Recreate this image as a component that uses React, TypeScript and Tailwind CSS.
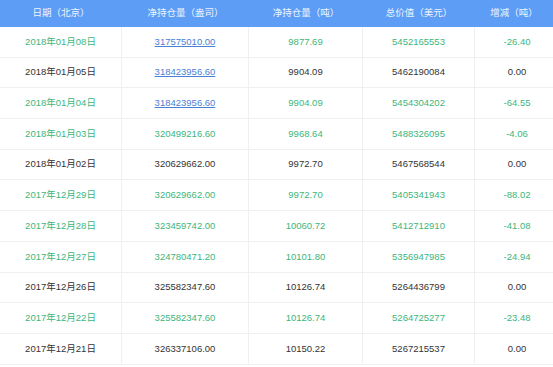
import React from 'react';

type Row = {
  date: string;
  oz: string;
  ton: string;
  value: string;
  change: string;
  link?: boolean;
};

const rows: Row[] = [
  { date: '2018年01月08日', oz: '317575010.00', ton: '9877.69', value: '5452165553', change: '-26.40', link: true },
  { date: '2018年01月05日', oz: '318423956.60', ton: '9904.09', value: '5462190084', change: '0.00', link: true },
  { date: '2018年01月04日', oz: '318423956.60', ton: '9904.09', value: '5454304202', change: '-64.55', link: true },
  { date: '2018年01月03日', oz: '320499216.60', ton: '9968.64', value: '5488326095', change: '-4.06' },
  { date: '2018年01月02日', oz: '320629662.00', ton: '9972.70', value: '5467568544', change: '0.00' },
  { date: '2017年12月29日', oz: '320629662.00', ton: '9972.70', value: '5405341943', change: '-88.02' },
  { date: '2017年12月28日', oz: '323459742.00', ton: '10060.72', value: '5412712910', change: '-41.08' },
  { date: '2017年12月27日', oz: '324780471.20', ton: '10101.80', value: '5356947985', change: '-24.94' },
  { date: '2017年12月26日', oz: '325582347.60', ton: '10126.74', value: '5264436799', change: '0.00' },
  { date: '2017年12月22日', oz: '325582347.60', ton: '10126.74', value: '5264725277', change: '-23.48' },
  { date: '2017年12月21日', oz: '326337106.00', ton: '10150.22', value: '5267215537', change: '0.00' },
];

const cols = ['w-[122px]', 'w-[127px]', 'w-[114px]', 'w-[112px]', 'flex-1'];

export default function App() {
  return (
    <div
      className="h-[367px] w-[553px] overflow-hidden bg-white text-[9.5px]"
      style={{ fontFamily: '"Liberation Sans", "Noto Sans CJK SC", sans-serif' }}
    >
      {/* 表头 */}
      <div className="flex h-[27px] items-center bg-[#5d9df5] text-[#eef4fe]">
        <div className={`${cols[0]} text-center`}>日期（北京）</div>
        <div className={`${cols[1]} text-center`}>净持仓量（盎司）</div>
        <div className={`${cols[2]} text-center`}>净持仓量（吨）</div>
        <div className={`${cols[3]} text-center`}>总价值（美元）</div>
        <div className={`${cols[4]} text-center`}>增减（吨）</div>
      </div>

      {/* 数据行 */}
      {rows.map((r) => {
        const down = r.change.startsWith('-');
        const tone = down ? 'text-[#3db57c]' : 'text-[#333333]';
        return (
          <div key={r.date} className={`flex h-[30.7px] items-center border-b border-[#f0f0f0] ${tone}`}>
            <div className={`${cols[0]} flex h-full items-center justify-center border-r border-[#f0f0f0]`}>
              {r.date}
            </div>
            <div className={`${cols[1]} flex h-full items-center justify-center border-r border-[#f0f0f0]`}>
              {r.link ? (
                <span className="text-[#4a80d4] underline underline-offset-1">{r.oz}</span>
              ) : (
                r.oz
              )}
            </div>
            <div className={`${cols[2]} flex h-full items-center justify-center border-r border-[#f0f0f0]`}>
              {r.ton}
            </div>
            <div className={`${cols[3]} flex h-full items-center justify-center border-r border-[#f0f0f0]`}>
              {r.value}
            </div>
            <div className={`${cols[4]} flex h-full items-center justify-center pl-[6px]`}>{r.change}</div>
          </div>
        );
      })}
    </div>
  );
}
